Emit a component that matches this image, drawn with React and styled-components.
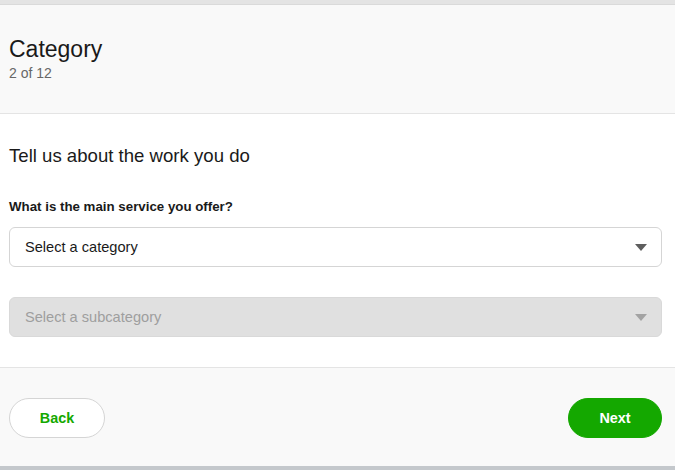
import React, { useState } from 'react';
import styled, { createGlobalStyle } from 'styled-components';

const GlobalStyle = createGlobalStyle`
  html, body {
    margin: 0;
    padding: 0;
    background: #ffffff;
  }
  body {
    font-family: "Liberation Sans", Arial, sans-serif;
    color: #001e00;
  }
`;

const Modal = styled.div`
  width: 675px;
  height: 470px;
  display: flex;
  flex-direction: column;
  background: #ffffff;
  border-top: 4px solid #e4e4e4;
  border-bottom: 4px solid #c4c8cc;
  box-sizing: border-box;
`;

const Header = styled.header`
  background: #f9f9f9;
  padding: 31px 9px 31px;
  border-top: 1px solid #dadada;
  border-bottom: 1px solid #e4e4e4;
`;

const Title = styled.h1`
  margin: 0;
  font-size: 23px;
  line-height: 26px;
  font-weight: 400;
  color: #1a1a1a;
`;

const Step = styled.div`
  margin-top: 2px;
  font-size: 14px;
  line-height: 18px;
  color: #676767;
`;

const Body = styled.main`
  padding: 30px 13px 30px 9px;
  display: flex;
  flex-direction: column;
`;

const Heading = styled.h2`
  margin: 0 0 30px;
  font-size: 18.6px;
  line-height: 24px;
  font-weight: 400;
  color: #1a1a1a;
`;

const Label = styled.label`
  display: block;
  font-size: 13.3px;
  line-height: 18px;
  font-weight: 700;
  color: #1a1a1a;
  margin-bottom: 11px;
`;

const SelectBox = styled.button`
  display: flex;
  align-items: center;
  justify-content: space-between;
  width: 100%;
  height: 40px;
  padding: 0 15px;
  box-sizing: border-box;
  border: 1px solid ${({ disabled }) => (disabled ? '#d9d9d9' : '#d5d5d5')};
  border-radius: 6px;
  background: ${({ disabled }) => (disabled ? '#e0e0e0' : '#ffffff')};
  color: ${({ disabled }) => (disabled ? '#9e9e9e' : '#1a1a1a')};
  font-family: inherit;
  font-size: 14.6px;
  text-align: left;
  cursor: ${({ disabled }) => (disabled ? 'default' : 'pointer')};
  margin-top: ${({ $spaced }) => ($spaced ? '30px' : '0')};
`;

const Arrow = styled.span`
  width: 0;
  height: 0;
  border-left: 6px solid transparent;
  border-right: 6px solid transparent;
  border-top: 7px solid ${({ $muted }) => ($muted ? '#a3a3a3' : '#5e5e5e')};
  margin-right: -1px;
`;

const Footer = styled.footer`
  flex: 1;
  background: #f9f9f9;
  border-top: 1px solid #e4e4e4;
  padding: 30px 13px 0 9px;
  display: flex;
  justify-content: space-between;
  align-items: flex-start;
`;

const PillButton = styled.button`
  height: 40px;
  width: ${({ $w }) => $w}px;
  border-radius: 20px;
  font-family: inherit;
  font-size: 14.4px;
  font-weight: 700;
  cursor: pointer;
  border: 1px solid ${({ $primary }) => ($primary ? '#14a800' : '#d5d5d5')};
  background: ${({ $primary }) => ($primary ? '#14a800' : '#ffffff')};
  color: ${({ $primary }) => ($primary ? '#ffffff' : '#14a800')};
`;

export default function App() {
  const [category] = useState('');

  return (
    <>
      <GlobalStyle />
      <Modal>
        <Header>
          <Title>Category</Title>
          <Step>2 of 12</Step>
        </Header>
        <Body>
          <Heading>Tell us about the work you do</Heading>
          <Label>What is the main service you offer?</Label>
          <SelectBox type="button">
            <span>{category || 'Select a category'}</span>
            <Arrow />
          </SelectBox>
          <SelectBox type="button" disabled $spaced>
            <span>Select a subcategory</span>
            <Arrow $muted />
          </SelectBox>
        </Body>
        <Footer>
          <PillButton $w={96} type="button">Back</PillButton>
          <PillButton $w={94} $primary type="button">Next</PillButton>
        </Footer>
      </Modal>
    </>
  );
}
